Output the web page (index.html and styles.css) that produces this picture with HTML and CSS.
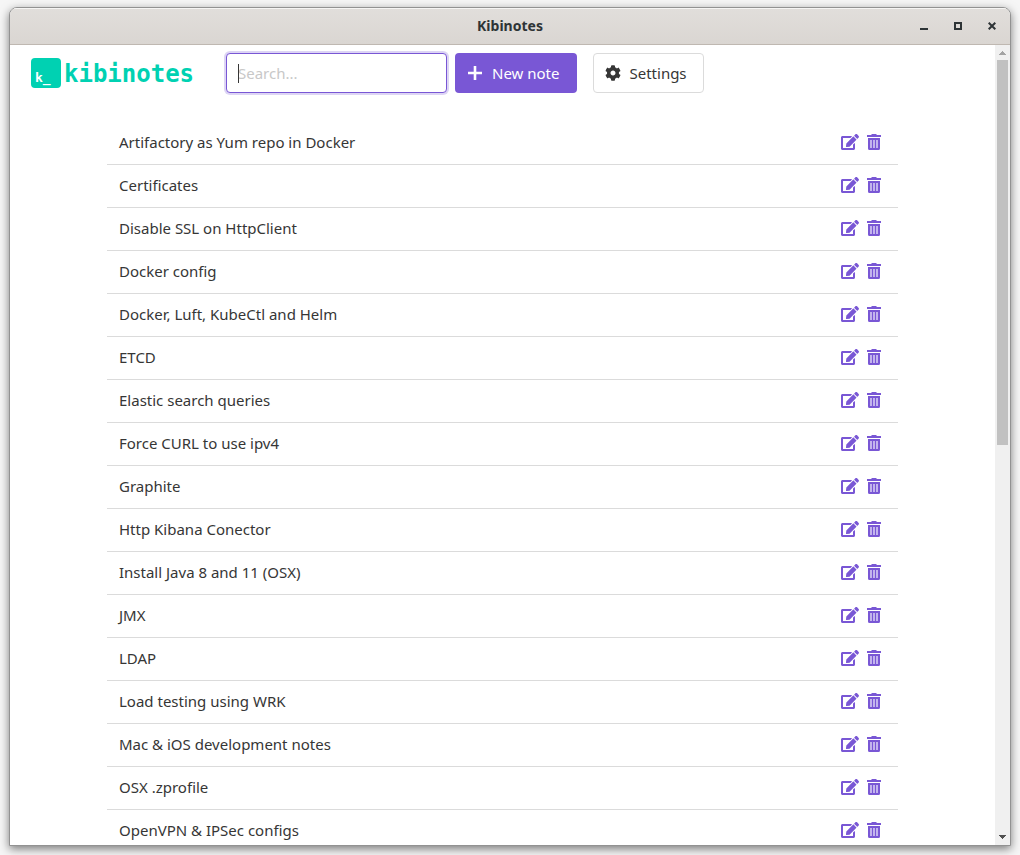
FILE: index.html
```html
<!DOCTYPE html>
<html lang="en">
<head>
<meta charset="utf-8">
<title>Kibinotes</title>
<link rel="stylesheet" href="styles.css">
</head>
<body>
<svg class="sprite" aria-hidden="true">
  <symbol id="edit" viewBox="0 0 576 512"><path d="M402.6 83.2l90.2 90.2c3.8 3.8 3.8 10 0 13.8L274.4 405.6l-92.8 10.3c-12.4 1.4-22.9-9.1-21.5-21.5l10.3-92.8L388.8 83.2c3.8-3.8 10-3.8 13.8 0zm162-22.9l-48.8-48.8c-15.2-15.2-39.9-15.2-55.2 0l-35.4 35.4c-3.8 3.8-3.8 10 0 13.8l90.2 90.2c3.8 3.8 10 3.8 13.8 0l35.4-35.4c15.2-15.3 15.2-40 0-55.2zM384 346.2V448H64V128h229.8c3.2 0 6.2-1.3 8.5-3.5l40-40c7.6-7.6 2.2-20.5-8.5-20.5H48C21.5 64 0 85.5 0 112v352c0 26.5 21.5 48 48 48h352c26.5 0 48-21.5 48-48V306.2c0-10.7-12.9-16-20.5-8.5l-40 40c-2.2 2.3-3.5 5.3-3.5 8.5z"/></symbol>
  <symbol id="trash" viewBox="0 0 14 16"><path d="M0 1h4l1-1h4l1 1h4v2H0zM1 4h12v10.500q0 1.500-1.500 1.500h-9Q1 16 1 14.500z"/><path class="slats" d="M3 6h2v8H3zM6 6h2v8H6zM9 6h2v8H9z"/></symbol>
</svg>
<div class="window">
  <div class="titlebar">
    <span class="title">Kibinotes</span>
    <div class="window-controls">
      <button type="button" aria-label="Minimize"><svg viewBox="0 0 8 8"><path d="M0 6h8v2H0z"/></svg></button>
      <button type="button" aria-label="Maximize"><svg viewBox="0 0 8 8"><path fill-rule="evenodd" d="M0 0h8v8H0zM2 2v4h4V2z"/></svg></button>
      <button type="button" aria-label="Close"><svg viewBox="0 0 8 8"><path class="cross" d="M.7.7l6.600 6.600M7.300.7L.7 7.300"/></svg></button>
    </div>
  </div>
  <div class="viewport">
    <main class="page">
      <header class="toolbar">
        <a class="brand" href="#"><span class="brand-mark">k_</span><span class="brand-name">kibinotes</span></a>
        <div class="search">
          <input type="text" placeholder="Search..." aria-label="Search">
          <span class="caret"></span>
        </div>
        <button type="button" class="button primary"><svg viewBox="0 0 14 14"><path d="M5.700 0h2.600v5.700H14v2.600H8.300V14H5.700V8.300H0V5.700h5.700z"/></svg>New note</button>
        <button type="button" class="button settings"><svg viewBox="0 0 512 512"><path d="M487.4 315.7l-42.6-24.6c4.3-23.2 4.3-47 0-70.2l42.6-24.6c4.9-2.8 7.1-8.6 5.5-14-11.1-35.6-30-67.8-54.7-94.6-3.8-4.1-10-5.1-14.8-2.3L380.8 110c-17.9-15.4-38.5-27.3-60.8-35.1V25.8c0-5.6-3.9-10.5-9.4-11.7-36.7-8.2-74.3-7.8-109.2 0-5.5 1.2-9.4 6.1-9.4 11.7V75c-22.2 7.9-42.8 19.8-60.8 35.1L88.7 85.5c-4.9-2.8-11-1.9-14.8 2.3-24.7 26.7-43.6 58.9-54.7 94.6-1.7 5.4.6 11.2 5.5 14L67.3 221c-4.3 23.2-4.3 47 0 70.2l-42.6 24.6c-4.9 2.8-7.1 8.6-5.5 14 11.1 35.6 30 67.8 54.7 94.6 3.8 4.1 10 5.1 14.8 2.3l42.6-24.6c17.900 15.400 38.500 27.300 60.800 35.100v49.200c0 5.600 3.900 10.500 9.400 11.700 36.700 8.200 74.300 7.800 109.200 0 5.500-1.200 9.400-6.100 9.400-11.700v-49.200c22.200-7.900 42.800-19.800 60.800-35.100l42.600 24.600c4.900 2.800 11 1.900 14.800-2.300 24.700-26.700 43.600-58.900 54.700-94.600 1.500-5.500-.7-11.300-5.600-14.100zM256 336c-44.100 0-80-35.900-80-80s35.900-80 80-80 80 35.900 80 80-35.900 80-80 80z"/></svg>Settings</button>
      </header>
      <table class="notes"><tbody id="notes"></tbody></table>
    </main>
    <div class="scrollbar" aria-hidden="true">
      <svg class="arrow" viewBox="0 0 7 4"><path d="M3 0h1v1h1v1h1v1h1v1H0V3h1V2h1V1h1z"/></svg>
      <div class="track"><div class="thumb"></div></div>
      <svg class="arrow down" viewBox="0 0 7 4"><path d="M0 0h7v1H6v1H5v1H4v1H3V3H2V2H1V1H0z"/></svg>
    </div>
  </div>
</div>
<script src="notes.js"></script>
</body>
</html>
```

FILE: styles.css
```css
* { box-sizing: border-box; }

body {
  margin: 0;
  height: 100vh;
  padding: 7px 9px 9px;
  overflow: hidden;
  background: #f6f6f6;
  color: #363636;
  font: 15px/24px "Noto Sans", sans-serif;
}

button, input { font: inherit; color: inherit; }
button { padding: 0; border: 0; background: none; }
svg { display: block; fill: currentColor; }
.sprite { display: none; }

.window {
  display: flex;
  flex-direction: column;
  height: 100%;
  overflow: hidden;
  background: #fff;
  border: 1px solid #929292;
  border-radius: 8px 8px 0 0;
  box-shadow: 0 3px 10px rgba(0, 0, 0, .5);
}

.titlebar {
  display: grid;
  grid-template-columns: 1fr auto 1fr;
  align-items: center;
  flex: none;
  height: 37px;
  padding-right: 14px;
  background: linear-gradient(#e1dedb, #dad6d2);
  border-bottom: 1px solid #bfb8b1;
  box-shadow: inset 0 1px #f6f5f4;
}
.title {
  grid-column: 2;
  padding-left: 14px;
  color: #2e3436;
  font-size: 14px;
  font-weight: 700;
}
.window-controls {
  display: flex;
  justify-content: flex-end;
  gap: 26px;
  color: #2e3436;
}
.window-controls svg { width: 8px; height: 8px; }
.cross { fill: none; stroke: currentColor; stroke-width: 2; }

.viewport { display: flex; flex: 1; min-height: 0; }
.page { flex: 1; min-width: 0; overflow: hidden; }

.toolbar {
  display: flex;
  align-items: center;
  height: 56px;
  padding-left: 21px;
}
.brand {
  display: flex;
  align-items: center;
  gap: 3px;
  width: 195px;
  color: #00d1b2;
  text-decoration: none;
}
.brand-mark {
  width: 30px;
  height: 30px;
  padding: 10px 0 0 4px;
  border-radius: 4px;
  background: #00d1b2;
  color: #fff;
  font: 700 13px/20px "DejaVu Sans Mono", monospace;
}
.brand-name { padding-top: 2px; font: 700 24px/30px "DejaVu Sans Mono", monospace; }

.search { position: relative; width: 221px; margin-right: 8px; }
.search input {
  display: block;
  width: 100%;
  height: 40px;
  padding: 0 11px;
  border: 1px solid #7957d5;
  border-radius: 4px;
  outline: 0;
  background: #fff;
  box-shadow: 0 0 0 2px rgba(121, 87, 213, .25);
}
.search input::placeholder { color: #c8c8c8; opacity: 1; }
.caret {
  position: absolute;
  top: 11px;
  left: 12px;
  width: 1px;
  height: 19px;
  background: #363636;
}

.button {
  display: flex;
  align-items: center;
  height: 40px;
  border-radius: 4px;
  padding: 0 18px 0 13px;
  gap: 10px;
}
.button svg { width: 14px; height: 14px; }
.primary { background: #7957d5; color: #fff; margin-right: 16px; }
.settings { padding: 0 16px 0 11px; gap: 8px; border: 1px solid #dbdbdb; background: #fff; }
.settings svg { width: 16px; height: 16px; }

.notes {
  width: calc(100% - 194px);
  margin: 21px 97px 0;
  border-collapse: separate;
  border-spacing: 0;
}
.notes td {
  height: 43px;
  padding: 0 12px 3px;
  border-bottom: 1px solid #dbdbdb;
}
.notes td:last-child { padding-right: 17px; }
.actions {
  display: flex;
  justify-content: flex-end;
  gap: 8px;
  color: #7957d5;
}
.edit svg { width: 18px; height: 16px; }
.trash svg { width: 14px; height: 16px; }
.slats { fill: #c3b4ed; }

.scrollbar {
  display: flex;
  flex-direction: column;
  align-items: center;
  flex: none;
  width: 15px;
  padding: 6px 0;
  background: #f0f0f0;
}
.arrow { width: 7px; height: 4px; color: #a3a3a3; }
.down { color: #505050; }
.track { flex: 1; width: 11px; padding: 5px 0; }
.thumb { height: 50%; background: #c1c1c1; }
```

FILE: notes.js
```js
const notes = [
  "Artifactory as Yum repo in Docker",
  "Certificates",
  "Disable SSL on HttpClient",
  "Docker config",
  "Docker, Luft, KubeCtl and Helm",
  "ETCD",
  "Elastic search queries",
  "Force CURL to use ipv4",
  "Graphite",
  "Http Kibana Conector",
  "Install Java 8 and 11 (OSX)",
  "JMX",
  "LDAP",
  "Load testing using WRK",
  "Mac & iOS development notes",
  "OSX .zprofile",
  "OpenVPN & IPSec configs"
];

const body = document.getElementById("notes");
for (const note of notes) {
  const row = body.insertRow();
  row.insertCell().textContent = note;
  row.insertCell().innerHTML = `<div class="actions">
    <button type="button" class="edit" aria-label="Edit"><svg><use href="#edit"/></svg></button>
    <button type="button" class="trash" aria-label="Delete"><svg><use href="#trash"/></svg></button>
  </div>`;
}
```
